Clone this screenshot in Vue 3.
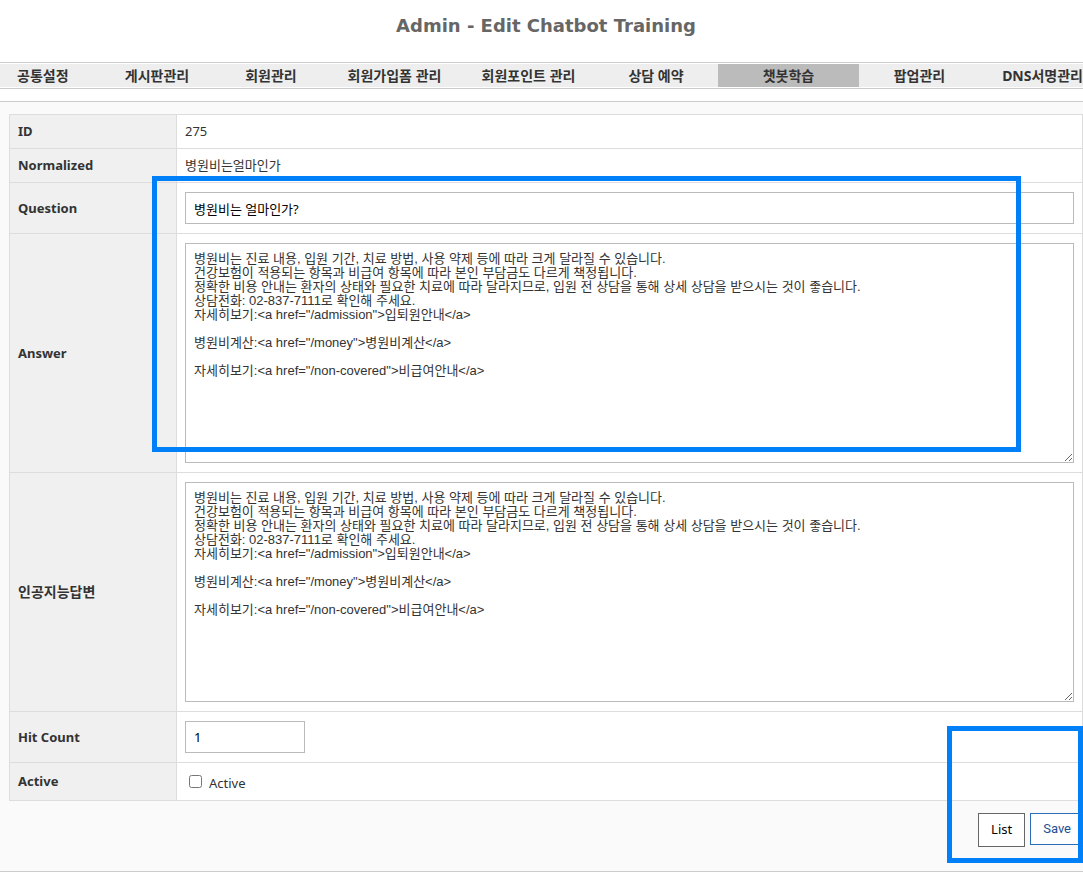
<template>
  <div class="admin">
    <header class="page-header">
      <h1>Admin - Edit Chatbot Training</h1>
    </header>

    <nav class="menu">
      <ul>
        <li v-for="item in menus" :key="item" :class="{ active: item === current }">
          <a href="#">{{ item }}</a>
        </li>
      </ul>
    </nav>

    <main class="content">
      <form @submit.prevent>
        <table class="edit-table">
          <tbody>
            <tr>
              <th scope="row">ID</th>
              <td>{{ form.id }}</td>
            </tr>
            <tr>
              <th scope="row">Normalized</th>
              <td>{{ form.normalized }}</td>
            </tr>
            <tr>
              <th scope="row"><label for="question">Question</label></th>
              <td><input id="question" v-model="form.question" type="text" class="field" /></td>
            </tr>
            <tr>
              <th scope="row"><label for="answer">Answer</label></th>
              <td><textarea id="answer" v-model="form.answer" class="field area"></textarea></td>
            </tr>
            <tr>
              <th scope="row"><label for="ai-answer" lang="ko">인공지능답변</label></th>
              <td><textarea id="ai-answer" v-model="form.aiAnswer" class="field area"></textarea></td>
            </tr>
            <tr>
              <th scope="row"><label for="hit-count">Hit Count</label></th>
              <td><input id="hit-count" v-model="form.hitCount" type="text" class="field short" /></td>
            </tr>
            <tr>
              <th scope="row">Active</th>
              <td>
                <label class="check"><input v-model="form.active" type="checkbox" />Active</label>
              </td>
            </tr>
          </tbody>
        </table>

        <div class="buttons">
          <a href="#" class="btn btn-list">List</a>
          <button type="submit" class="btn btn-save">Save</button>
        </div>
      </form>

      <div class="mark mark-answer"></div>
      <div class="mark mark-buttons"></div>
    </main>
  </div>
</template>

<script setup>
import { reactive } from 'vue'

const menus = [
  '공통설정',
  '게시판관리',
  '회원관리',
  '회원가입폼 관리',
  '회원포인트 관리',
  '상담 예약',
  '챗봇학습',
  '팝업관리',
  'DNS서명관리'
]
const current = '챗봇학습'

const answer = `병원비는 진료 내용, 입원 기간, 치료 방법, 사용 약제 등에 따라 크게 달라질 수 있습니다.
건강보험이 적용되는 항목과 비급여 항목에 따라 본인 부담금도 다르게 책정됩니다.
정확한 비용 안내는 환자의 상태와 필요한 치료에 따라 달라지므로, 입원 전 상담을 통해 상세 상담을 받으시는 것이 좋습니다.
상담전화: 02-837-7111로 확인해 주세요.
자세히보기:<a href="/admission">입퇴원안내</a>

병원비계산:<a href="/money">병원비계산</a>

자세히보기:<a href="/non-covered">비급여안내</a>`

const form = reactive({
  id: 275,
  normalized: '병원비는얼마인가',
  question: '병원비는 얼마인가?',
  answer,
  aiAnswer: answer,
  hitCount: '1',
  active: false
})
</script>

<style>
body {
  margin: 0;
  background-color: #fff;
}
</style>

<style scoped>
.admin {
  overflow: hidden;
  font-family: "Noto Sans", "Noto Sans CJK KR", sans-serif;
  font-size: 13px;
  line-height: 20px;
  color: #333;
}

.page-header {
  padding: 12px 0 23px;
}

.page-header h1 {
  margin: 0;
  padding-left: 9px;
  text-align: center;
  font-family: "DejaVu Sans", sans-serif;
  font-size: 18px;
  line-height: 27px;
  color: #666;
}

/* 상단 메뉴 */
.menu {
  padding: 1px 0;
  border-top: 1px solid #ccc;
  border-bottom: 1px solid #ccc;
}

.menu ul {
  display: grid;
  grid-template-columns: 98fr 118fr 110fr 137fr 131fr 124fr 141fr 121fr 103fr;
  margin: 0;
  padding: 0;
  list-style: none;
  background-color: #eee;
}

.menu li {
  text-align: center;
  font-size: 14px;
  line-height: 23px;
  white-space: nowrap;
}

.menu li:first-child {
  padding-left: 17px;
  text-align: left;
}

.menu li:last-child {
  display: flex;
  justify-content: flex-end;
}

.menu li.active {
  background-color: #bbb;
}

.menu a {
  font-weight: bold;
  color: #333;
  text-decoration: none;
}

/* 수정 폼 */
.content {
  position: relative;
  margin-top: 12px;
  padding: 12px 0 24px 9px;
  border-top: 1px solid #ccc;
  border-bottom: 1px solid #ccc;
  background-color: #fafafa;
}

.edit-table {
  width: 100%;
  border-collapse: collapse;
  background-color: #fff;
}

.edit-table th,
.edit-table td {
  padding: 9px 8px;
  border: 1px solid #ddd;
  line-height: 15px;
}

.edit-table th {
  width: 150px;
  text-align: left;
  background-color: #f0f0f0;
}

.edit-table label:lang(ko) {
  font-size: 14px;
}

.field {
  display: block;
  box-sizing: border-box;
  width: 100%;
  height: 32px;
  padding: 0 8px;
  border: 1px solid #bbb;
  border-radius: 0;
  font-family: inherit;
  font-size: 13px;
  color: #000;
  background-color: #fff;
}

.area {
  height: 220px;
  padding: 8px;
  font-family: "Liberation Sans", "Noto Sans CJK KR", sans-serif;
  line-height: 14px;
  color: #333;
  resize: both;
}

.short {
  width: 120px;
}

.check {
  display: flex;
  align-items: center;
  gap: 7px;
  padding-top: 3px;
  line-height: 16px;
}

.check input {
  width: 13px;
  height: 13px;
  margin: 0 0 3px 4px;
}

.buttons {
  display: flex;
  justify-content: flex-end;
  align-items: flex-start;
  gap: 5px;
  margin-right: -1px;
  padding-top: 12px;
}

.btn {
  box-sizing: border-box;
  padding: 0 12px;
  border: 1px solid #666;
  font-family: inherit;
  font-size: 13px;
  line-height: 30px;
  text-decoration: none;
  color: #000;
  background-color: #fff;
  cursor: pointer;
}

.btn-list {
  height: 34px;
}

.btn-save {
  height: 32px;
  border-color: #2a6ebb;
  font-family: Roboto, sans-serif;
  color: #1c4f91;
}

/* 강조 상자 */
.mark {
  position: absolute;
  box-sizing: border-box;
  border: 5px solid #0080f8;
  pointer-events: none;
}

.mark-answer {
  top: 74px;
  left: 152px;
  right: 62px;
  height: 276px;
}

.mark-buttons {
  right: 0;
  bottom: 8px;
  width: 136px;
  height: 137px;
}
</style>
